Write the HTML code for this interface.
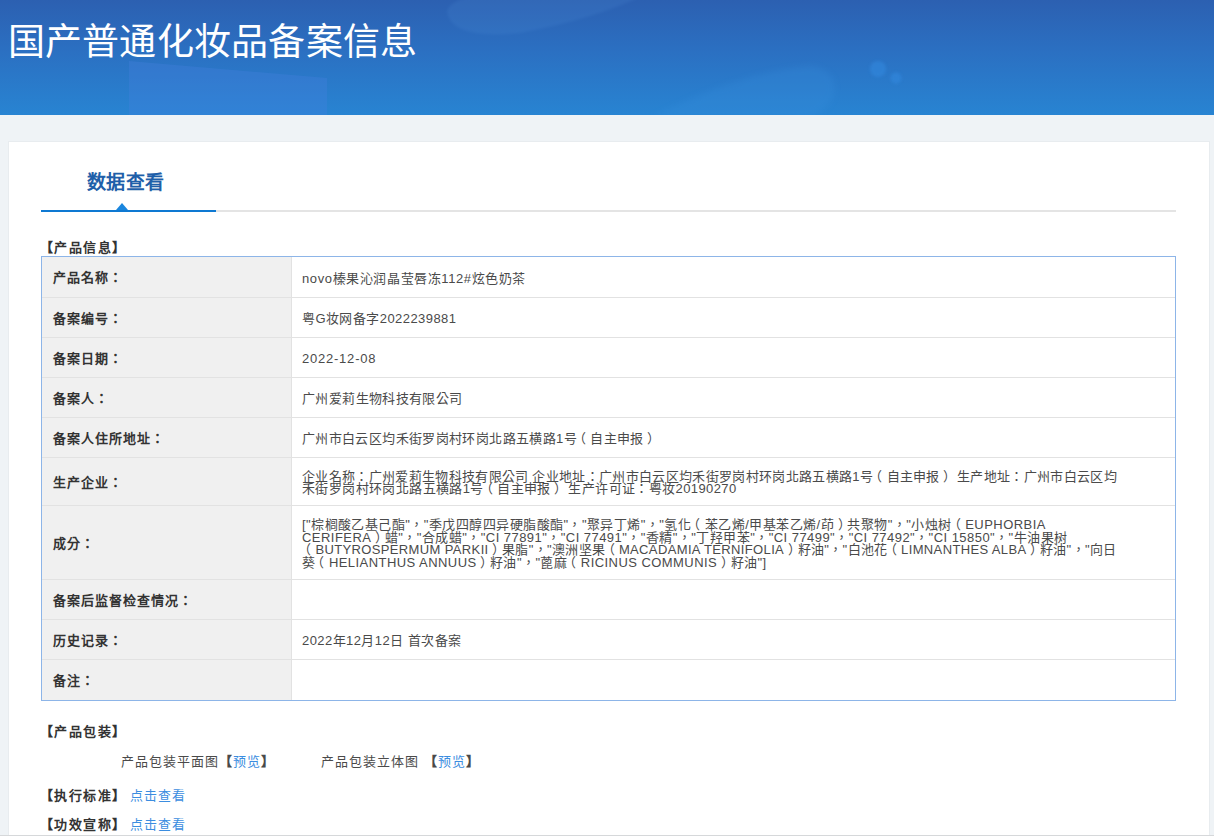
<!DOCTYPE html>
<html lang="zh-TW">
<head>
<meta charset="utf-8">
<style>
*{margin:0;padding:0;box-sizing:border-box;}
html,body{width:1214px;height:836px;overflow:hidden;}
body{background:#eff3f6;font-family:"Liberation Sans",sans-serif;color:#333;font-size:13px;letter-spacing:0.33px;position:relative;}
.hdr{position:absolute;left:0;top:0;width:1214px;height:115px;overflow:hidden;background:linear-gradient(180deg,#2c60b1 0%,#2b70c2 45%,#2884d2 100%);}
.hdr svg{position:absolute;left:0;top:0;}
.title{position:absolute;left:7.5px;top:21px;font-size:37px;line-height:44px;letter-spacing:0.25px;color:#fff;white-space:nowrap;}
.card{position:absolute;left:9px;top:142px;width:1200px;height:693px;background:#fff;box-shadow:0 0 0 1px #e8ecef;}
.bline{position:absolute;left:0;top:835px;width:1214px;height:1px;background:#d6d8da;}
.tab{position:absolute;left:87px;top:169px;font-size:19px;letter-spacing:0.3px;line-height:28px;font-weight:bold;color:#1f5fa9;white-space:nowrap;}
.gline{position:absolute;left:41px;top:210px;width:1135px;height:2px;background:#e4e4e4;}
.bl{position:absolute;left:41px;top:210px;width:175px;height:2px;background:#0e79d2;}
.tri{position:absolute;left:116px;top:203px;width:0;height:0;border-left:6.5px solid transparent;border-right:6.5px solid transparent;border-bottom:7px solid #1a86de;}
.sec{position:absolute;left:40px;font-weight:bold;white-space:nowrap;line-height:16px;letter-spacing:1.4px;}
.tbl{position:absolute;left:41px;top:256px;width:1135px;border:1px solid #8db5e8;}
.row{position:relative;border-bottom:1px solid #e2e2e2;}
.row:last-child{border-bottom:none;}
.lab{position:absolute;left:0;top:0;bottom:0;width:250px;background:#f0f0f0;border-right:1px solid #e2e2e2;}
.lt{position:absolute;left:11px;font-weight:bold;white-space:nowrap;line-height:16px;letter-spacing:1px;}
.vt{position:absolute;left:260px;white-space:nowrap;line-height:16px;color:#4a4a4a;}
.pl{position:relative;left:-4px;}
.pr{position:relative;left:3.5px;}
.abs{position:absolute;white-space:nowrap;line-height:16px;color:#4a4a4a;}
b{font-weight:bold;}
.link,.abs.link{color:#3b8de0;}
</style>
</head>
<body>
<div class="hdr">
<svg width="1214" height="115" viewBox="0 0 1214 115">
<defs><filter id="b1" x="-50%" y="-50%" width="200%" height="200%"><feGaussianBlur stdDeviation="1.5"/></filter><filter id="b2" x="-50%" y="-50%" width="200%" height="200%"><feGaussianBlur stdDeviation="3"/></filter></defs><polygon points="129,61 327,78 327,115 129,115" fill="#4a80e0" opacity="0.3"/><path d="M447,12 Q450,-8 530,-8 L650,-8 Q600,18 520,33 Q452,40 447,12 Z" fill="#5a9ae0" opacity="0.14" filter="url(#b1)"/><path d="M650,118 Q740,72 810,66 Q842,70 832,100 Q820,118 800,118 Z" fill="#3a92e0" opacity="0.22" filter="url(#b2)"/><circle cx="878" cy="69" r="8" fill="#3088de" opacity="0.6" filter="url(#b1)"/><circle cx="896" cy="78" r="5.5" fill="#3088de" opacity="0.6" filter="url(#b1)"/>
</svg>
<div class="title" lang="zh-CN">国产普通化妆品备案信息</div>
</div>
<div class="card"></div>
<div class="bline"></div>
<div class="tab">数据查看</div>
<div class="gline"></div>
<div class="bl"></div>
<div class="tri"></div>
<div class="sec" style="top:240px;"><span lang="zh-CN">【</span>产品信息<span lang="zh-CN">】</span></div>
<div class="tbl">
<div class="row" style="height:41px;">
<div class="lab"><div class="lt" style="top:13.30px;">产品名称：</div></div>
<div class="vt" style="top:13.50px;letter-spacing:0.593px;">novo榛果沁润晶莹唇冻112#炫色奶茶</div>
</div>
<div class="row" style="height:40px;">
<div class="lab"><div class="lt" style="top:12.80px;">备案编号：</div></div>
<div class="vt" style="top:13.00px;letter-spacing:0.437px;">粤G妆网备字2022239881</div>
</div>
<div class="row" style="height:40px;">
<div class="lab"><div class="lt" style="top:12.80px;">备案日期：</div></div>
<div class="vt" style="top:13.00px;letter-spacing:0.774px;">2022-12-08</div>
</div>
<div class="row" style="height:40px;">
<div class="lab"><div class="lt" style="top:12.80px;">备案人：</div></div>
<div class="vt" style="top:13.00px;letter-spacing:0.384px;">广州爱莉生物科技有限公司</div>
</div>
<div class="row" style="height:40px;">
<div class="lab"><div class="lt" style="top:12.80px;">备案人住所地址：</div></div>
<div class="vt" style="top:13.00px;letter-spacing:0.368px;">广州市白云区均禾街罗岗村环岗北路五横路1号<span class="pl">（</span>自主申报<span class="pr">）</span></div>
</div>
<div class="row" style="height:48px;">
<div class="lab"><div class="lt" style="top:16.80px;">生产企业：</div></div>
<div class="vt" style="top:10.55px;letter-spacing:0.326px;">企业名称：广州爱莉生物科技有限公司 企业地址：广州市白云区均禾街罗岗村环岗北路五横路1号<span class="pl">（</span>自主申报<span class="pr">）</span> 生产地址：广州市白云区均</div>
<div class="vt" style="top:23.45px;letter-spacing:0.402px;">禾街罗岗村环岗北路五横路1号<span class="pl">（</span>自主申报<span class="pr">）</span> 生产许可证：粤妆20190270</div>
</div>
<div class="row" style="height:74px;">
<div class="lab"><div class="lt" style="top:29.80px;">成分：</div></div>
<div class="vt" style="top:10.65px;letter-spacing:0.453px;">["棕榈酸乙基己酯"，"季戊四醇四异硬脂酸酯"，"聚异丁烯"，"氢化<span class="pl">（</span>苯乙烯/甲基苯乙烯/茚<span class="pr">）</span>共聚物"，"小烛树<span class="pl">（</span>EUPHORBIA</div>
<div class="vt" style="top:23.55px;letter-spacing:0.454px;">CERIFERA<span class="pr">）</span>蜡"，"合成蜡"，"CI 77891"，"CI 77491"，"香精"，"丁羟甲苯"，"CI 77499"，"CI 77492"，"CI 15850"，"牛油果树</div>
<div class="vt" style="top:36.45px;letter-spacing:0.366px;"><span class="pl">（</span>BUTYROSPERMUM PARKII<span class="pr">）</span>果脂"，"澳洲坚果<span class="pl">（</span>MACADAMIA TERNIFOLIA<span class="pr">）</span>籽油"，"白池花<span class="pl">（</span>LIMNANTHES ALBA<span class="pr">）</span>籽油"，"向日</div>
<div class="vt" style="top:49.35px;letter-spacing:0.443px;">葵<span class="pl">（</span>HELIANTHUS ANNUUS<span class="pr">）</span>籽油"，"蓖麻<span class="pl">（</span>RICINUS COMMUNIS<span class="pr">）</span>籽油"]</div>
</div>
<div class="row" style="height:40px;">
<div class="lab"><div class="lt" style="top:12.80px;">备案后监督检查情况：</div></div>
</div>
<div class="row" style="height:40px;">
<div class="lab"><div class="lt" style="top:12.80px;">历史记录：</div></div>
<div class="vt" style="top:13.00px;letter-spacing:0.436px;">2022年12月12日 首次备案</div>
</div>
<div class="row" style="height:40px;">
<div class="lab"><div class="lt" style="top:13.30px;">备注：</div></div>
</div>
</div>
<div class="sec" style="top:723.5px;"><span lang="zh-CN">【</span>产品包装<span lang="zh-CN">】</span></div>
<div class="abs" style="left:121px;top:753.5px;letter-spacing:1px;">产品包装平面图<b lang="zh-CN">【</b><span class="link">预览</span><b lang="zh-CN">】</b></div>
<div class="abs" style="left:321px;top:753.5px;letter-spacing:1px;">产品包装立体图 <b lang="zh-CN">【</b><span class="link">预览</span><b lang="zh-CN">】</b></div>
<div class="sec" style="top:788px;"><span lang="zh-CN">【</span>执行标准<span lang="zh-CN">】</span></div>
<div class="abs link" style="left:130px;top:788px;letter-spacing:1px;">点击查看</div>
<div class="sec" style="top:817px;"><span lang="zh-CN">【</span>功效宣称<span lang="zh-CN">】</span></div>
<div class="abs link" style="left:130px;top:817px;letter-spacing:1px;">点击查看</div>
</body>
</html>
